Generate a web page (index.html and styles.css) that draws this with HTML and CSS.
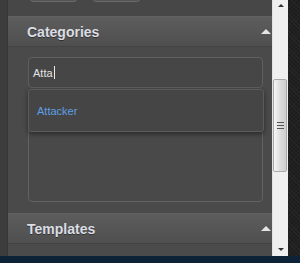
FILE: index.html
```html
<!DOCTYPE html>
<html lang="en">

<head>
    <meta charset="UTF-8">
    <title>Categories</title>
    <link rel="stylesheet" href="styles.css">
</head>

<body>
    <div class="main">
        <div class="side_strip"></div>
        <div class="panel">
            <div class="toolbar">
                <button type="button" class="tool_btn"></button>
                <button type="button" class="tool_btn"></button>
            </div>
            <div class="section_head">
                <span class="section_title">Categories</span>
                <span class="collapse"></span>
            </div>
            <div class="section_body">
                <div class="search_wrap">
                    <div class="search_input">Atta<span class="caret"></span></div>
                    <ul class="suggest">
                        <li class="suggest_item">Attacker</li>
                    </ul>
                    <div class="cat_list"></div>
                </div>
            </div>
            <div class="section_head">
                <span class="section_title">Templates</span>
                <span class="collapse"></span>
            </div>
            <div class="section_rest"></div>
        </div>
        <div class="scrollbar">
            <span class="scroll_arrow up"></span>
            <div class="scroll_track">
                <div class="scroll_thumb">
                    <span class="grip"></span>
                </div>
            </div>
            <span class="scroll_arrow down"></span>
        </div>
        <div class="texture"></div>
    </div>
    <div class="footer"></div>
</body>

</html>
```

FILE: styles.css
```css
html,
body {
    margin: 0;
    padding: 0;
    box-sizing: border-box;
}

*,
*:before,
*:after {
    box-sizing: inherit;
}

body {
    width: 300px;
    height: 263px;
    overflow: hidden;
    font-family: "Liberation Sans", Arial, sans-serif;
    background: #0b2237;
}

.main {
    display: flex;
    height: 256px;
}

.side_strip {
    width: 8px;
    background: #3d3d3d;
    border-right: 1px solid #363636;
}

/* panel */
.panel {
    width: 264px;
    display: flex;
    flex-direction: column;
    background: #4a4a4a;
}

.toolbar {
    height: 16px;
    display: flex;
    gap: 16px;
    padding-left: 22px;
    background: #474747;
    overflow: hidden;
}

.tool_btn {
    width: 47px;
    height: 20px;
    margin-top: -18px;
    background: #555;
    border: 1px solid #6a6a6a;
    border-radius: 3px;
}

.section_head {
    height: 31px;
    display: flex;
    align-items: center;
    justify-content: space-between;
    padding: 0 1px 0 19px;
    background: linear-gradient(#5d5d5d, #4f4f4f);
    border-top: 1px solid #626262;
    border-bottom: 1px solid #434343;
}

.section_title {
    font-size: 14px;
    font-weight: bold;
    color: #dadde3;
    text-shadow: 0 1px 0 #333;
    margin-top: 1px;
}

.collapse {
    width: 0;
    height: 0;
    border-left: 5px solid transparent;
    border-right: 5px solid transparent;
    border-bottom: 5px solid #e4e4e4;
    margin-top: -1px;
}

.section_body {
    padding: 10px 9px 11px 20px;
}

.search_wrap {
    position: relative;
}

.search_input {
    height: 31px;
    display: flex;
    align-items: center;
    padding-left: 4px;
    font-size: 11px;
    color: #e2e2e2;
    background: #464646;
    border: 1px solid #5f5f5f;
    border-radius: 4px;
}

.caret {
    display: inline-block;
    width: 1px;
    height: 13px;
    margin-left: 1px;
    background: #e8e8e8;
}

.cat_list {
    height: 111px;
    margin-top: 3px;
    background: #494949;
    border: 1px solid #626262;
    border-radius: 4px;
}

/* suggestions menu */
.suggest {
    position: absolute;
    top: 32px;
    left: 0;
    right: -1px;
    height: 43px;
    margin: 0;
    padding: 0 0 0 8px;
    list-style: none;
    display: flex;
    align-items: center;
    background: #454545;
    border: 1px solid #5b5b5b;
    border-radius: 3px;
    box-shadow: 0 2px 5px rgba(0, 0, 0, 0.45);
}

.suggest_item {
    font-size: 11px;
    color: #5e9fe3;
}

.section_rest {
    flex: 1;
    background: #4b4b4b;
}

/* scrollbar */
.scrollbar {
    width: 16px;
    display: flex;
    flex-direction: column;
    align-items: center;
    background: #efefef;
    border-left: 1px solid #e2e2e2;
}

.scroll_arrow {
    width: 0;
    height: 0;
    border-left: 3px solid transparent;
    border-right: 3px solid transparent;
}

.scroll_arrow.up {
    margin: 4px 0 3px;
    border-bottom: 3px solid #333;
}

.scroll_arrow.down {
    margin: 3px 0 5px;
    border-top: 3px solid #333;
}

.scroll_track {
    flex: 1;
    width: 100%;
    padding-top: 69px;
}

.scroll_thumb {
    width: 14px;
    height: 93px;
    display: flex;
    justify-content: center;
    align-items: center;
    background: linear-gradient(to right, #f6f6f6, #d9d9d9 60%, #cfcfcf);
    border: 1px solid #a9a9a9;
    border-radius: 2px;
}

.grip {
    width: 7px;
    height: 8px;
    background: repeating-linear-gradient(#555 0 1px, transparent 1px 3px);
}

.texture {
    flex: 1;
    background-color: #1c1c1c;
    background-image: repeating-linear-gradient(45deg, #262626 0 1px, transparent 1px 3px),
        repeating-linear-gradient(-45deg, #222 0 1px, transparent 1px 3px);
}

.footer {
    height: 7px;
    background: #0b2237;
}
```
